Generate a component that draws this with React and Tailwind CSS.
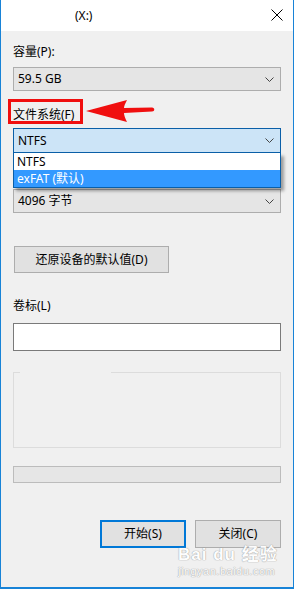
import React from 'react'

const Chevron = () => (
  <svg width="9" height="5" viewBox="0 0 9 5" className="shrink-0">
    <path d="M0.5 0.5 L4.5 4.5 L8.5 0.5" fill="none" stroke="#444" strokeWidth="1" />
  </svg>
);

const Combo = ({ value, focused }) => (
  <div
    className={
      focused
        ? "h-[25px] flex items-center justify-between pl-[4px] pr-[6px] border border-[#0a5fa8] bg-[#cce4f7]"
        : "h-[24px] flex items-center justify-between pl-[4px] pr-[6px] border border-[#adadad] bg-[#e5e5e5]"
    }
  >
    <span>{value}</span>
    <Chevron />
  </div>
);

const App = () => {
  return (
    <div className="relative w-[294px] h-[589px] flex flex-col bg-[#f0f0f0] border-x border-b-2 border-[#1883d7] text-[12px] leading-[14px] text-black font-['Segoe_UI','Noto_Sans','Noto_Sans_CJK_SC',sans-serif] overflow-hidden">

      {/* ------ TITLE BAR ------ */}
      <div className="h-[31px] bg-white flex items-center shrink-0">
        <span className="ml-[74px]">(X:)</span>
        <svg width="12" height="12" viewBox="0 0 12 12" className="ml-auto mr-[10px] -mt-[2px]">
          <path d="M0.5 0.5 L11.5 11.5 M11.5 0.5 L0.5 11.5" stroke="#000" strokeWidth="1" />
        </svg>
      </div>

      {/* ------ BODY ------ */}
      <div className="flex flex-col px-3">
        <div className="mt-[14px]">容量(P):</div>
        <div className="mt-[8px]">
          <Combo value="59.5 GB" />
        </div>

        <div className="mt-[17px]">文件系统(F)</div>
        <div className="relative mt-[6px]">
          <Combo value="NTFS" focused />
          <div className="absolute left-0 top-full w-[268px] z-10 border border-[#0a5fa8] border-t-0 bg-white shadow-[3px_3px_3px_rgba(0,0,0,0.35)]">
            <div className="h-[17px] flex items-center pl-[3px]">NTFS</div>
            <div className="h-[17px] flex items-center pl-[3px] bg-[#3399ff] text-white">exFAT (默认)</div>
          </div>
        </div>

        <div className="mt-[36px]">
          <Combo value="4096 字节" />
        </div>

        <button className="mt-[33px] ml-px w-[155px] h-[27px] border border-[#adadad] bg-[#e1e1e1] text-center">
          还原设备的默认值(D)
        </button>

        <div className="mt-[26px]">卷标(L)</div>
        <div className="mt-[10px] h-[28px] border border-[#7a7a7a] bg-white"></div>

        {/* group box with empty caption */}
        <div className="relative mt-[21px] h-[76px] border border-[#dcdcdc]">
          <div className="absolute -top-px left-[6px] w-[91px] h-px bg-[#f0f0f0]"></div>
        </div>

        <div className="mt-[18px] h-[17px] border border-[#bcbcbc] bg-[#e6e6e6]"></div>

        <div className="mt-[37px] flex justify-end gap-[9px]">
          <button className="w-[86px] h-[28px] border-2 border-[#0078d7] bg-[#e1e1e1]">开始(S)</button>
          <button className="w-[86px] h-[28px] border border-[#adadad] bg-[#e1e1e1]">关闭(C)</button>
        </div>
      </div>

      {/* ------ ANNOTATION ------ */}
      <div className="absolute left-[7px] top-[99px] w-[75px] h-[25px] border-[3px] border-[#f00f0f]"></div>
      <svg className="absolute left-[83px] top-[99px]" width="72" height="25" viewBox="0 0 72 25">
        <path
          d="M2 12 L43 1 C41 5 40 7 40 9 L68 8.5 C71 8.5 71 12.5 68 12.5 L40 14 C40 16 41 19 43 23 Z"
          fill="#f00f0f"
        />
      </svg>

      {/* ------ WATERMARK ------ */}
      <div className="absolute left-[177px] top-[545px] flex flex-col items-start text-white opacity-90 font-['Liberation_Sans','Noto_Sans_CJK_SC',sans-serif] [text-shadow:0_0_1px_#9a9a9a,0_0_1px_#9a9a9a]">
        <span className="text-[17px] leading-[19px] font-bold tracking-[1px]">Bai du 经验</span>
        <span className="text-[11px] leading-[14px] tracking-[0.5px]">jingyan.baidu.com</span>
      </div>
    </div>
  );
};

export default App;
